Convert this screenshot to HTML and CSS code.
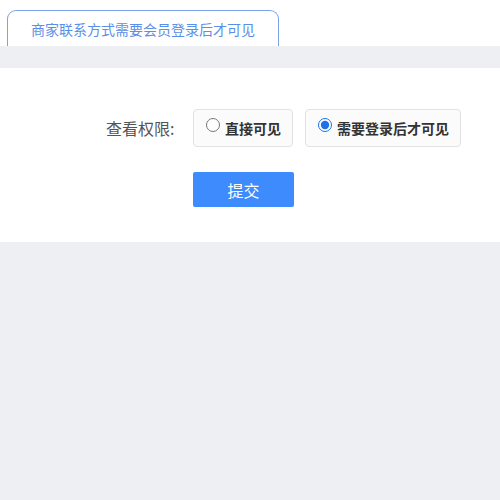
FILE: index.html
```html
<!DOCTYPE html>
<html lang="zh">
<head>
<meta charset="utf-8">
<link rel="stylesheet" href="styles.css">
</head>
<body>
<div class="tabs">
  <div class="tab">商家联系方式需要会员登录后才可见</div>
</div>
<div class="gap"></div>
<form class="panel">
  <div class="row">
    <span class="label">查看权限:</span>
    <label class="opt"><input type="radio" name="v"><span>直接可见</span></label>
    <label class="opt"><input type="radio" name="v" checked><span>需要登录后才可见</span></label>
  </div>
  <div class="actions">
    <button type="button" class="btn">提交</button>
  </div>
</form>
</body>
</html>
```
FILE: styles.css
```css
html, body { margin: 0; padding: 0; }
body {
  background: #eeeff3;
  font-family: "Noto Sans CJK SC", "Noto Sans", sans-serif;
  width: 500px;
  height: 500px;
}
.tabs {
  background: #fff;
  padding: 10px 0 0 7px;
  height: 46px;
  box-sizing: border-box;
}
.tab {
  width: 272px;
  height: 36px;
  box-sizing: border-box;
  border: 1px solid #7aa3ea;
  border-bottom: none;
  border-radius: 9px 9px 0 0;
  color: #5b8ee6;
  font-size: 14px;
  line-height: 36px;
  text-align: center;
}
.gap { height: 22px; }
.panel {
  background: #fff;
  height: 174px;
  margin: 0;
  padding-top: 41px;
  box-sizing: border-box;
}
.row {
  display: flex;
  align-items: center;
  padding-left: 106px;
}
.label {
  font-size: 16px;
  color: #555;
  width: 87px;
}
.opt {
  display: flex;
  align-items: center;
  height: 38px;
  box-sizing: border-box;
  border: 1px solid #e2e2e2;
  border-radius: 4px;
  background: #fbfbfb;
  padding: 0 11px 0 12px;
  margin-right: 12px;
  font-size: 14px;
  font-weight: bold;
  color: #333;
}
.opt input {
  margin: 0 5px 0 0;
  width: 14px;
  height: 14px;
  position: relative;
  top: -3px;
  accent-color: #1a73e8;
}
.actions {
  padding-left: 193px;
  margin-top: 25px;
}
.btn {
  width: 101px;
  height: 35px;
  border: none;
  border-radius: 2px;
  background: #3d8bfd;
  color: #fff;
  font-size: 16px;
  font-family: "Noto Sans CJK SC", "Noto Sans", sans-serif;
  padding: 0;
}
```
